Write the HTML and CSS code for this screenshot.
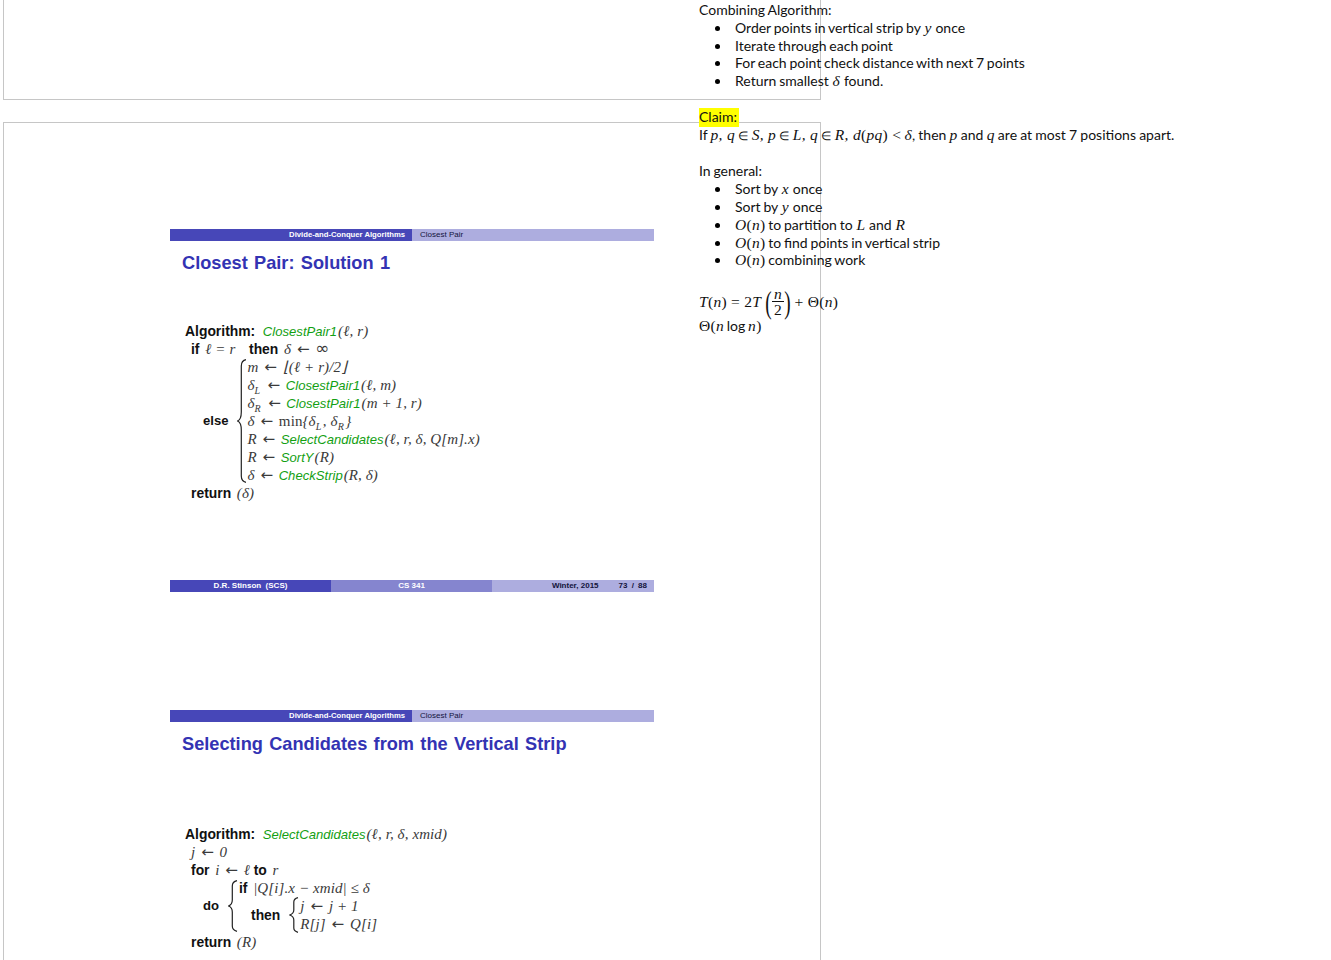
FILE: index.html
```html
<!DOCTYPE html>
<html lang="en">
<head>
<meta charset="utf-8">
<title>Divide-and-Conquer Algorithms notes</title>
<link rel="stylesheet" href="styles.css">
</head>
<body>
<main class="canvas">
  <div class="page page-top"></div>
  <div class="page page-main">
    <section class="slide slide-one">
      <header class="headline">
        <div class="head-left">Divide-and-Conquer Algorithms</div>
        <div class="head-right">Closest Pair</div>
      </header>
      <h1 class="title">Closest Pair: Solution 1</h1>
      <div class="algo algo-one">
        <div class="ln top"><b>Algorithm:</b> <span class="fn">ClosestPair1</span><span class="m">(ℓ, r)</span></div>
        <div class="ln ind"><b>if</b> <span class="m">ℓ = r</span> <b class="then-word">then</b> <span class="m">δ <span class="ar">←</span> <span class="inf">∞</span></span></div>
        <div class="branch else-branch">
          <b class="branch-label">else</b>
          <svg class="brace brace-else" viewBox="0 0 10 124" aria-hidden="true"><path d="M9 .7C5.5 1.500 4.300 3.500 4.300 7V53C4.300 58 3 61 .6 62C3 63 4.300 66 4.300 71V117C4.300 120.500 5.500 122.500 9 123.300"/></svg>
          <div class="lines">
            <div class="ln"><span class="m">m <span class="ar">←</span> ⌊(ℓ + r)/2⌋</span></div>
            <div class="ln"><span class="m">δ<sub>L</sub> <span class="ar">←</span></span> <span class="fn">ClosestPair1</span><span class="m">(ℓ, m)</span></div>
            <div class="ln"><span class="m">δ<sub>R</sub> <span class="ar">←</span></span> <span class="fn">ClosestPair1</span><span class="m">(m + 1, r)</span></div>
            <div class="ln"><span class="m">δ <span class="ar">←</span> <span class="up">min</span>{δ<sub>L</sub>, δ<sub>R</sub>}</span></div>
            <div class="ln"><span class="m">R <span class="ar">←</span></span> <span class="fn">SelectCandidates</span><span class="m">(ℓ, r, δ, Q[m].x)</span></div>
            <div class="ln"><span class="m">R <span class="ar">←</span></span> <span class="fn">SortY</span><span class="m">(R)</span></div>
            <div class="ln"><span class="m">δ <span class="ar">←</span></span> <span class="fn">CheckStrip</span><span class="m">(R, δ)</span></div>
          </div>
        </div>
        <div class="ln ind"><b>return</b> <span class="m">(δ)</span></div>
      </div>
      <footer class="footline">
        <div class="foot-a">D.R. Stinson &nbsp;(SCS)</div>
        <div class="foot-b">CS 341</div>
        <div class="foot-c"><span>Winter, 2015</span><span class="pages">73 / 88</span></div>
      </footer>
    </section>
    <section class="slide slide-two">
      <header class="headline">
        <div class="head-left">Divide-and-Conquer Algorithms</div>
        <div class="head-right">Closest Pair</div>
      </header>
      <h1 class="title">Selecting Candidates from the Vertical Strip</h1>
      <div class="algo algo-two">
        <div class="ln top"><b>Algorithm:</b> <span class="fn">SelectCandidates</span><span class="m">(ℓ, r, δ, xmid)</span></div>
        <div class="ln ind"><span class="m">j <span class="ar">←</span> 0</span></div>
        <div class="ln ind"><b>for</b> <span class="m">i <span class="ar">←</span> ℓ</span> <b>to</b> <span class="m">r</span></div>
        <div class="branch do-branch">
          <b class="branch-label">do</b>
          <svg class="brace brace-do" viewBox="0 0 10 52" aria-hidden="true"><path d="M9 .7C5.500 1.500 4.300 3 4.300 6V20C4.300 23 3 25 .6 26C3 27 4.300 29 4.300 32V46C4.300 49 5.500 50.500 9 51.300"/></svg>
          <div class="lines">
            <div class="ln"><b>if</b> <span class="m">|Q[i].x − xmid| ≤ δ</span></div>
            <div class="then-row">
              <b>then</b>
              <svg class="brace brace-then" viewBox="0 0 10 36" aria-hidden="true"><path d="M9 .7C6 1.500 4.800 3 4.800 5V13C4.800 15.500 3.500 17 .8 18C3.500 19 4.800 20.500 4.800 23V31C4.800 33 6 34.500 9 35.300"/></svg>
              <div class="lines">
                <div class="ln"><span class="m">j <span class="ar">←</span> j + 1</span></div>
                <div class="ln"><span class="m">R[j] <span class="ar">←</span> Q[i]</span></div>
              </div>
            </div>
          </div>
        </div>
        <div class="ln ind"><b>return</b> <span class="m">(R)</span></div>
      </div>
    </section>
  </div>
  <aside class="notes">
    <p class="note">Combining Algorithm:</p>
    <ul class="bullets">
      <li>Order points in vertical strip by <i class="v">y</i> once</li>
      <li>Iterate through each point</li>
      <li>For each point check distance with next 7 points</li>
      <li>Return smallest <i class="v">δ</i> found.</li>
    </ul>
    <p class="note gap"><mark class="hl">Claim:</mark></p>
    <p class="note claim-text">If <i class="v">p, q</i> <span class="v in">∈</span> <i class="v">S, p</i> <span class="v in">∈</span> <i class="v">L, q</i> <span class="v in">∈</span> <i class="v">R, d</i><span class="v">(</span><i class="v">pq</i><span class="v">) &lt;</span> <i class="v">δ</i>, then <i class="v">p</i> and <i class="v">q</i> are at most 7 positions apart.</p>
    <p class="note gap">In general:</p>
    <ul class="bullets bullets-general">
      <li>Sort by <i class="v">x</i> once</li>
      <li>Sort by <i class="v">y</i> once</li>
      <li><span class="v"><i>O</i>(<i>n</i>)</span> to partition to <i class="v">L</i> and <i class="v">R</i></li>
      <li><span class="v"><i>O</i>(<i>n</i>)</span> to find points in vertical strip</li>
      <li><span class="v"><i>O</i>(<i>n</i>)</span> combining work</li>
    </ul>
    <div class="formula">
      <span class="v"><i>T</i>(<i>n</i>) = 2<i>T</i></span>
      <span class="paren paren-open">(</span>
      <span class="frac"><i class="v">n</i><span class="v">2</span></span>
      <span class="paren">)</span>
      <span class="v tail">+ Θ(<i>n</i>)</span>
    </div>
    <p class="note last"><span class="v">Θ(<i>n</i></span> log <i class="v">n</i><span class="v">)</span></p>
  </aside>
</main>
</body>
</html>
```
FILE: styles.css
```css
* { box-sizing: border-box; }
html, body { margin: 0; height: 960px; overflow: hidden; background: #fff; }

.canvas { position: relative; width: 1331px; height: 960px; overflow: hidden; }

.page { width: 818px; margin-left: 3px; border: 1px solid #c6c6c6; background: #fff; }
.page-top { height: 100px; border-top: 0; }
.page-main { height: 860px; margin-top: 22px; border-bottom: 0; padding: 106px 0 0 166px; }

.slide { width: 484px; font-family: "Liberation Sans", sans-serif; color: #111; }
.slide-one { height: 363px; display: flex; flex-direction: column; }
.slide-two { margin-top: 118px; }

.headline { display: flex; height: 12px; font-size: 7.7px; line-height: 11px; font-weight: 700; }
.head-left { width: 242px; background: #4747b8; color: #fff; text-align: right; padding-right: 7px; }
.head-right { flex: 1; background: #adaddf; color: #14143c; padding-left: 8px; font-size: 8px; font-weight: 400; }

.title { margin: 11px 0 0 12px; font-size: 18.2px; line-height: 22px; font-weight: 700; color: #3333b3; word-spacing: 1.3px; }

.algo { font-size: 13.1px; line-height: 18px; margin-left: 15px; }
.algo-one { margin-top: 48px; }
.algo-two { margin-top: 70px; }
.algo b { font-size: 13.9px; font-weight: 700; }
.ln { height: 18px; white-space: nowrap; }
.ind { padding-left: 6px; }

.fn { font-style: italic; color: #13a013; }
b + .fn { margin-left: 4px; }
b + .m { margin-left: 2px; }
.fn + .m { margin-left: 1px; }
.then-word { margin-left: 10px; }
.m { font-family: "Liberation Serif", serif; font-style: italic; font-size: 15px; letter-spacing: .1px; color: #3a3a3a; }
.m .up { font-style: normal; }
.m sub { font-size: 10px; line-height: 0; margin-right: 1.5px; }
.ar { font-family: "DejaVu Sans", sans-serif; font-style: normal; font-size: 15px; letter-spacing: 0; margin: 0 2px; }
.inf { font-family: "DejaVu Sans", sans-serif; font-style: normal; font-size: 17px; line-height: 0; }

.branch { display: flex; align-items: center; padding-left: 18px; }
.algo .branch-label { display: block; font-size: 13.1px; }
.brace { flex: none; fill: none; stroke: #222; stroke-width: 1.2; }
.brace-else { width: 10px; height: 124px; margin-left: 9px; margin-right: 0; }
.brace-do { width: 10px; height: 52px; margin-left: 9px; margin-right: 1px; }
.brace-then { width: 10px; height: 36px; margin-left: 9px; margin-right: 1px; }
.then-row { display: flex; align-items: center; height: 36px; padding-left: 12px; }

.footline { display: flex; height: 12px; margin-top: auto; font-size: 8px; line-height: 11px; font-weight: 700; }
.foot-a { width: 161px; background: #4747b8; color: #fff; text-align: center; }
.foot-b { width: 161px; background: #8585cf; color: #fff; text-align: center; }
.foot-c { flex: 1; display: flex; justify-content: flex-end; gap: 20px; padding-right: 7px; background: #adaddf; color: #14143c; }
.pages { word-spacing: 2px; }

.notes { position: absolute; left: 699px; top: 1px; width: 600px; font-family: Lato, sans-serif; font-size: 14px; line-height: 17.8px; word-spacing: -.8px; color: #111; }
.note { margin: 0; height: 17.8px; white-space: nowrap; }
.gap { margin-top: 18px; }
.claim-text { word-spacing: -.4px; }
.bullets { margin: 0; padding: 0; list-style: none; }
.bullets-general { margin-top: .8px; }
.bullets-general li:last-child { margin-top: -.5px; }
.bullets li { position: relative; height: 17.8px; padding-left: 36px; white-space: nowrap; }
.bullets li::before { content: ""; position: absolute; left: 16px; top: 7px; width: 5px; height: 5px; border-radius: 50%; background: #000; }
.bullets li > i.v { margin: 0 1px; }
.hl { background: #ffff00; color: inherit; display: inline-block; height: 19px; padding-right: 2px; }
.v { font-family: "Liberation Serif", serif; font-size: 15.5px; letter-spacing: .3px; word-spacing: 0; }
.in { font-size: 12px; }

.formula { display: flex; align-items: center; height: 36px; margin-top: 15.3px; white-space: pre; }
.paren { font-family: "Liberation Serif", serif; font-size: 32px; line-height: 32px; font-weight: 400; transform: scaleX(.6); margin: 0 -2px; }
.paren-open { margin-left: 2px; }
.frac { display: inline-flex; flex-direction: column; align-items: center; width: 12px; line-height: 15px; }
.frac i { border-bottom: 1px solid #111; width: 100%; text-align: center; }
.tail { margin-left: 4px; }
.last { margin-top: -3px; }
```
